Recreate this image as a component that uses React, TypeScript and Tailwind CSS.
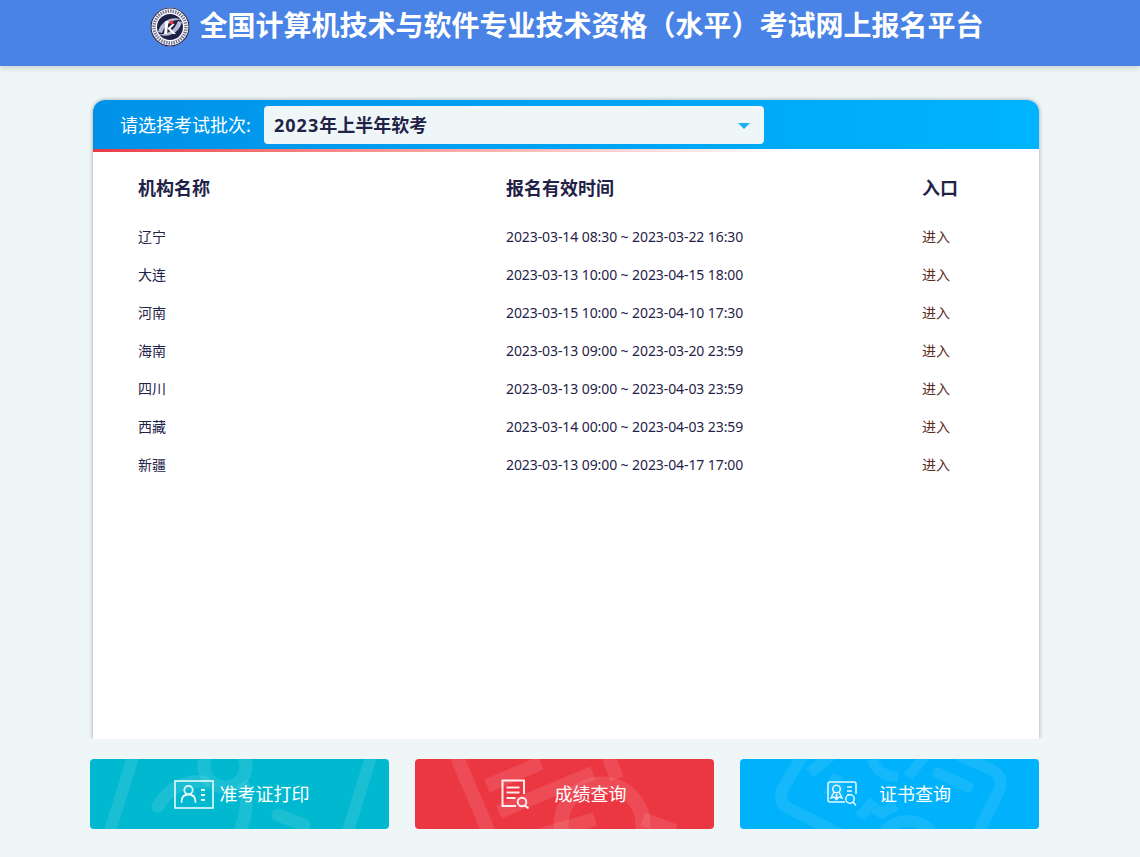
import React from "react";

const font = { fontFamily: '"Noto Sans", "Noto Sans CJK SC", sans-serif' };

const rows = [
  ["辽宁", "2023-03-14 08:30 ~ 2023-03-22 16:30"],
  ["大连", "2023-03-13 10:00 ~ 2023-04-15 18:00"],
  ["河南", "2023-03-15 10:00 ~ 2023-04-10 17:30"],
  ["海南", "2023-03-13 09:00 ~ 2023-03-20 23:59"],
  ["四川", "2023-03-13 09:00 ~ 2023-04-03 23:59"],
  ["西藏", "2023-03-14 00:00 ~ 2023-04-03 23:59"],
  ["新疆", "2023-03-13 09:00 ~ 2023-04-17 17:00"],
];

function Logo() {
  return (
    <svg width="40" height="40" viewBox="0 0 40 40" className="shrink-0">
      <circle cx="20" cy="20" r="19.5" fill="#fff" />
      <circle cx="20" cy="20" r="19" fill="none" stroke="#23274f" strokeWidth="1.2" />
      <circle cx="20" cy="20" r="16" fill="none" stroke="#6f7290" strokeWidth="3.5" strokeDasharray="1.5 1" />
      <circle cx="20" cy="20" r="13" fill="#1d2148" />
      <path d="M8 25C11 14 22 8 32 13C25 12 16 15 12 26Z" fill="#b9bcd6" />
      <path d="M32 15C29 26 18 32 8 27C15 28 24 25 28 14Z" fill="#b9bcd6" />
      <path d="M15.500 14h3l-1.500 13h-3z" fill="#fff" />
      <path d="M19 20l7 7h-3l-5.500-5.500zM19 20l4-3.500 1.500 1-4 4z" fill="#fff" />
      <circle cx="21.500" cy="15.500" r="2" fill="#e0323e" />
    </svg>
  );
}

function CardIcon() {
  return (
    <svg width="40" height="29" viewBox="0 0 40 29" fill="none" stroke="#fff" className="shrink-0 opacity-90">
      <rect x="1" y="1" width="38" height="27" strokeWidth="1.600" />
      <circle cx="14.500" cy="10" r="4.200" strokeWidth="1.800" />
      <path d="M7.500 22c0-5 3-7.500 7-7.500s7 2.500 7 7.500" strokeWidth="1.800" strokeLinecap="round" />
      <path d="M27 10h4M27 15h4M27 20h4" strokeWidth="1.800" />
    </svg>
  );
}

function ScoreIcon() {
  return (
    <svg width="30" height="30" viewBox="0 0 30 30" fill="none" stroke="#fff" strokeWidth="2" className="shrink-0 opacity-90">
      <path d="M16 27H2.500V1.500H24V15" />
      <path d="M6.500 8.500h13M6.500 13.500h13M6.500 19h9" />
      <circle cx="22" cy="23" r="4.300" />
      <path d="M25 26.500l3.500 3" />
    </svg>
  );
}

function CertIcon() {
  return (
    <svg width="30" height="26" viewBox="0 0 30 26" fill="none" stroke="#fff" strokeWidth="1.500" className="shrink-0 opacity-90">
      <path d="M18 21H3a2 2 0 0 1-2-2V3a2 2 0 0 1 2-2h24a2 2 0 0 1 2 2v10" />
      <circle cx="9.500" cy="8" r="3.800" />
      <path d="M7 11l-3 6 3-1 2 2 .5-5 .5 5 2-2 3 1-3-6" />
      <path d="M20 6h5M20 10h5M20 14h2" />
      <circle cx="23" cy="18" r="4.200" />
      <path d="M26 21l3 3.500" />
    </svg>
  );
}

function WatermarkA() {
  return (
    <svg viewBox="0 0 299 70" className="absolute inset-0 h-full w-full" fill="none" stroke="#fff" strokeOpacity="0.1" strokeWidth="13">
      <path d="M43 -2L20 72" strokeWidth="12" />
      <path d="M281 -2L258 72" strokeWidth="12" />
      <path d="M68 47C78 30 94 21 114 23" strokeLinecap="round" />
      <circle cx="135" cy="7" r="21" />
      <path d="M152 24C160 36 156 60 148 76" />
      <path d="M188 56L214 66" strokeLinecap="round" />
    </svg>
  );
}

function WatermarkB() {
  return (
    <svg viewBox="0 0 299 70" className="absolute inset-0 h-full w-full" fill="none" stroke="#fff" strokeOpacity="0.1" strokeWidth="14">
      <path d="M41 -4L75 76" />
      <path d="M72 27L126 4M84 53L178 14" />
      <path d="M192 -6L202 20" />
      <circle cx="187" cy="66" r="41" strokeWidth="15" />
      <path d="M228 60L260 72" />
      <path d="M126 76L180 60" />
    </svg>
  );
}

function WatermarkC() {
  return (
    <svg viewBox="0 0 299 70" className="absolute inset-0 h-full w-full" fill="none" stroke="#fff" strokeOpacity="0.08" strokeWidth="12">
      <path d="M62 -2L46 24Q34 42 50 50L118 84" />
      <path d="M215 -6L250 10Q266 18 258 34L226 98" />
      <path d="M70 14L96 -8M98 16L92 30L104 32" />
      <path d="M132 0C136 12 146 18 158 18" strokeWidth="11" />
      <path d="M168 18L184 -2" strokeWidth="11" />
      <path d="M198 14L228 28" strokeLinecap="round" strokeWidth="11" />
      <path d="M120 58L130 46L142 54L156 46" strokeWidth="11" />
      <circle cx="168" cy="92" r="30" strokeWidth="12" />
    </svg>
  );
}

function ActionButton({ color, icon, label, gap, pad, watermark }: { color: string; icon: React.ReactNode; label: string; gap: string; pad: string; watermark: React.ReactNode }) {
  return (
    <div className={`relative flex h-[70px] w-[299px] items-center justify-center overflow-hidden rounded ${color}`}>
      {watermark}
      <div className={`relative flex items-center ${gap} ${pad}`}>
        {icon}
        <span className="text-lg text-white">{label}</span>
      </div>
    </div>
  );
}

export default function App() {
  return (
    <div className="flex h-[857px] w-[1140px] flex-col overflow-hidden bg-[#eff6f8]" style={font}>
      <header className="flex h-[66px] shrink-0 items-start justify-center gap-[9px] bg-[#4983e6] pt-[7px] pr-[6px] shadow-[0_2px_6px_rgba(0,0,0,0.15)]">
        <Logo />
        <h1 className="text-[28px] leading-[36px] font-bold text-white">全国计算机技术与软件专业技术资格（水平）考试网上报名平台</h1>
      </header>

      <main className="mx-[93px] mt-[34px] h-[639px] w-[946px] shrink-0 rounded-t-xl bg-white shadow-[0_0_4px_rgba(0,0,0,0.35)]">
        <div className="relative flex h-[49px] items-start rounded-t-xl bg-gradient-to-r from-[#0192e8] to-[#00b4ff] pt-[6px] pl-[27px]">
          <span className="flex h-[38px] w-[144px] items-center text-lg text-white">请选择考试批次:</span>
          <div className="flex h-[38px] w-[500px] items-center justify-between rounded-sm bg-[#eff6f8] pr-[14px] pl-[10px]">
            <span className="text-lg font-bold text-[#1f2347]"><span className="tracking-[1px]">2023</span>年上半年软考</span>
            <span className="mt-[1px] h-0 w-0 border-x-[6px] border-t-[6px] border-x-transparent border-t-[#1ab3f0]"></span>
          </div>
        </div>
        <div className="h-[3px] w-[700px] bg-gradient-to-r from-[#e83a45] to-white"></div>

        <div className="grid grid-cols-[368px_416px_1fr] px-[45px] text-[#1f2347]">
          <div className="flex h-[66px] items-center pt-[5px] text-lg font-bold">机构名称</div>
          <div className="flex h-[66px] items-center pt-[5px] text-lg font-bold">报名有效时间</div>
          <div className="flex h-[66px] items-center pt-[5px] text-lg font-bold">入口</div>
          {rows.map(([name, time]) => (
            <React.Fragment key={name}>
              <div className="flex h-[38px] items-center text-sm">{name}</div>
              <div className="flex h-[38px] items-center text-sm tracking-[-0.09px]">{time}</div>
              <div className="flex h-[38px] items-center text-sm text-[#5a2a1c]">进入</div>
            </React.Fragment>
          ))}
        </div>
      </main>

      <footer className="relative flex h-[118px] shrink-0 gap-[26px] bg-[#eff6f8] pt-[20px] pl-[90px]">
        <ActionButton color="bg-[#00b8d0]" icon={<CardIcon />} label="准考证打印" gap="gap-1.5" pad="ml-[4px]" watermark={<WatermarkA />} />
        <ActionButton color="bg-[#eb3742]" icon={<ScoreIcon />} label="成绩查询" gap="gap-[25px]" pad="-ml-[3px]" watermark={<WatermarkB />} />
        <ActionButton color="bg-[#00b2fb]" icon={<CertIcon />} label="证书查询" gap="gap-[22px]" pad="-ml-[1px]" watermark={<WatermarkC />} />
      </footer>
    </div>
  );
}
